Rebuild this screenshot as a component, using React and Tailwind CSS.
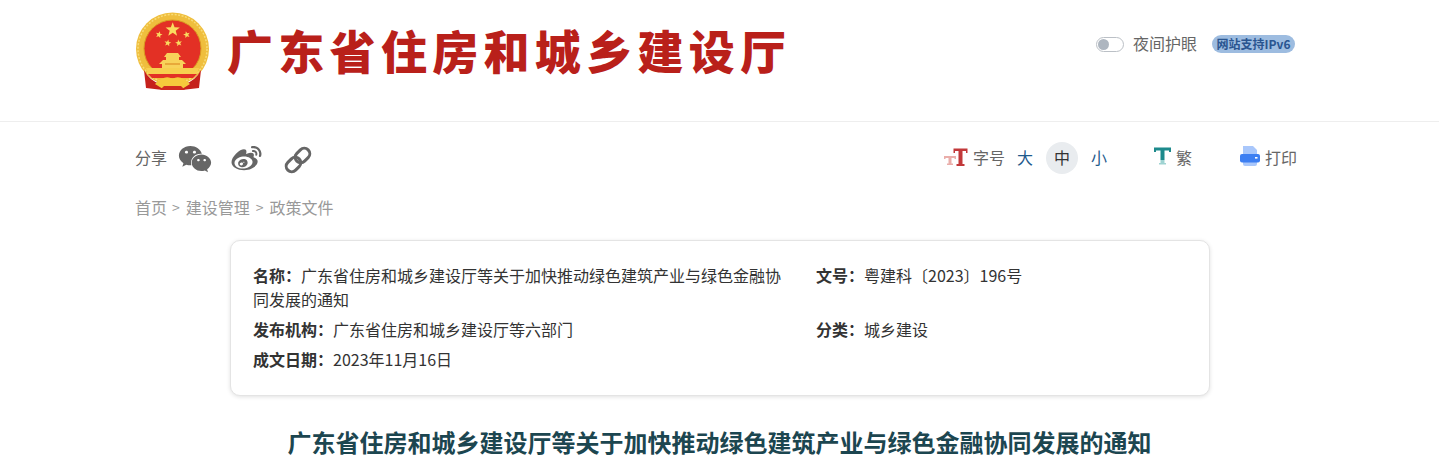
import React from "react";
import { FaWeixin, FaWeibo } from "react-icons/fa";

const font = { fontFamily: '"Noto Sans CJK SC", sans-serif' };

function Star({ cx, cy, r, rot = 0 }) {
  const pts = [];
  for (let i = 0; i < 10; i++) {
    const a = (-90 + rot + i * 36) * Math.PI / 180;
    const rr = i % 2 ? r * 0.42 : r;
    pts.push(`${(cx + rr * Math.cos(a)).toFixed(2)},${(cy + rr * Math.sin(a)).toFixed(2)}`);
  }
  return <polygon points={pts.join(" ")} fill="#fadb5f" />;
}

function Emblem() {
  return (
    <svg width="76" height="80" viewBox="0 0 76 80" className="block">
      <circle cx="37.5" cy="37" r="36.5" fill="#efbe3d" />
      <circle cx="37.5" cy="37" r="34.5" fill="none" stroke="#f8dc78" strokeWidth="1.5" strokeDasharray="2 1.5" />
      <circle cx="37.5" cy="36.5" r="28.5" fill="#e33025" stroke="#d99a22" strokeWidth="1" />
      <Star cx={37.7} cy={17.7} r={7.5} />
      <Star cx={24} cy={22.7} r={3.6} rot={15} />
      <Star cx={51.7} cy={22.7} r={3.6} rot={-15} />
      <Star cx={32.7} cy={31} r={3.6} rot={10} />
      <Star cx={43.7} cy={31} r={3.6} rot={-10} />
      <path d="M29 45 L32 41 H43 L46 45 H44 V48 H47 L51 52 H48 V56 H27 V52 H24 L28 48 H31 V45Z" fill="#f8d25a" />
      <path d="M30 51 H45 V53 H30Z" fill="#e8a93a" />
      <path d="M11 56 H64 L62 62 H13Z" fill="#f7cf4f" />
      <path d="M13 62 H62 L58 66 H17Z" fill="#e33025" />
      <path d="M9 58 Q14 68 25 72 L28 78 L11 76 Z" fill="#c5211c" />
      <path d="M66 58 Q61 68 50 72 L47 78 L64 76 Z" fill="#c5211c" />
      <path d="M20 72 Q30 62 37.5 67 Q45 62 55 72 L47 77 H28Z" fill="#f5c93c" />
      <path d="M25 78 H50 L46 74 H29Z" fill="#cf2a20" />
    </svg>
  );
}

function Link() {
  return (
    <svg width="28" height="28" viewBox="0 0 28 28" fill="none" stroke="#666" strokeWidth="3">
      <rect x="13" y="1.5" width="11" height="16" rx="5.5" transform="rotate(45 18.5 9.5)" />
      <rect x="4" y="10.5" width="11" height="16" rx="5.5" transform="rotate(45 9.5 18.5)" />
    </svg>
  );
}

function SizeIcon() {
  return (
    <svg width="25" height="19" viewBox="0 0 25 19">
      <path d="M1 8 H13 V11 H11.5 V10 H8.5 V15.5 H10 V17 H4 V15.5 H5.5 V10 H2.5 V11 H1Z" fill="#eaaeaa" />
      <path d="M10.5 0.5 H24.5 V5 H23 V3 H19.5 V16 H21.5 V18 H13.5 V16 H15.5 V3 H12 V5 H10.5Z" fill="#c2393a" />
    </svg>
  );
}

function TradIcon() {
  return (
    <svg width="17" height="18" viewBox="0 0 17 18">
      <path d="M0 0.5 H17 V5 H15 V3.5 H10.5 V13 H6.5 V3.5 H2 V5 H0Z" fill="#1d8a8c" />
      <path d="M6.5 13 H10.5 V16 H12 V17.5 H5 V16 H6.5Z" fill="#9fd3d2" />
    </svg>
  );
}

function Printer() {
  return (
    <svg width="20" height="22" viewBox="0 0 20 22">
      <path d="M3 1 H13 L17 5 V10 H3Z" fill="#a9c7fb" />
      <path d="M3 16 H17 V19 Q17 21 15 21 H5 Q3 21 3 19Z" fill="#a9c7fb" />
      <rect x="0" y="9" width="20" height="8.5" rx="2" fill="#3d7ff2" />
      <rect x="15" y="12" width="2.5" height="1.6" fill="#fff" />
    </svg>
  );
}

function Row({ label, children }) {
  return (
    <div className="text-[16px] leading-6 text-[#333]">
      <b className="font-bold text-[#333]">{label}：</b>
      {children}
    </div>
  );
}

export default function App() {
  return (
    <div className="w-[1439px] h-[468px] overflow-hidden bg-white" style={font}>
      <header className="h-[122px] border-b border-[#eeeeee]">
        <div className="w-[1162px] ml-[135px] flex items-start">
          <div className="pt-[12px] w-[76px] shrink-0"><Emblem /></div>
          <div className="ml-[16px] mt-[17px] text-[46px] leading-[64px] font-black text-[#b9201a] tracking-[5.3px] whitespace-nowrap">广东省住房和城乡建设厅</div>
          <div className="ml-auto mt-[31px] flex items-center h-[26px]">
            <span className="relative block w-[28px] h-[15px] rounded-full border border-[#bbc0c6] bg-white">
              <span className="absolute left-[1px] top-[1px] w-[11px] h-[11px] rounded-full bg-[#aeb6c0]" />
            </span>
            <span className="ml-[9px] pb-[2px] text-[16px] text-[#666]">夜间护眼</span>
            <span className="ml-[15px] w-[83px] h-[18px] rounded-full bg-[#9dbce0] text-[#2a5590] text-[12px] leading-[18px] font-bold text-center whitespace-nowrap">网站支持IPv6</span>
            <span className="w-[2px]" />
          </div>
        </div>
      </header>

      <div className="w-[1162px] ml-[135px] h-[72px] flex items-start justify-between pt-[20px]">
        <div className="flex items-center h-[32px] text-[#666] text-[16px] -mt-[1px]">
          <span>分享</span>
          <FaWeixin className="ml-[11px] mt-[4px] w-[34px] h-[30px] text-[#666]" />
          <FaWeibo className="ml-[17px] mt-[3px] w-[35px] h-[30px] text-[#666]" />
          <span className="ml-[20px] mt-[6px]"><Link /></span>
        </div>
        <div className="flex items-center h-[32px] -mt-[1px] text-[16px] text-[#666]">
          <SizeIcon />
          <span className="ml-[5px]">字号</span>
          <span className="ml-[12px] text-[#1f5a8c]">大</span>
          <span className="ml-[13px] mt-[2px] pb-[2px] w-[32px] h-[32px] rounded-full bg-[#e9ecef] text-[#333] flex items-center justify-center">中</span>
          <span className="ml-[13px] text-[#1f5a8c]">小</span>
          <span className="ml-[47px] -mt-[3px]"><TradIcon /></span>
          <span className="ml-[5px]">繁</span>
          <span className="ml-[48px] -mt-[3px]"><Printer /></span>
          <span className="ml-[5px]">打印</span>
        </div>
      </div>

      <nav className="ml-[135px] -mt-[3px] h-[32px] flex items-center text-[16px] text-[#999] whitespace-nowrap">
        首页<span className="ml-[5px] mr-[6px] text-[14px]">&gt;</span>建设管理<span className="mx-[6px] text-[14px]">&gt;</span>政策文件
      </nav>

      <section className="ml-[230px] mt-[17px] w-[980px] h-[156px] bg-white rounded-[10px] border border-[#e4e4e4] shadow-[0_1px_4px_rgba(0,0,0,0.12)] pl-[22px] pt-[22px] grid grid-cols-[563px_1fr] auto-rows-min content-start gap-y-[6px]">
        <div className="w-[540px]"><Row label="名称">广东省住房和城乡建设厅等关于加快推动绿色建筑产业与绿色金融协同发展的通知</Row></div>
        <Row label="文号">粤建科〔2023〕196号</Row>
        <Row label="发布机构">广东省住房和城乡建设厅等六部门</Row>
        <Row label="分类">城乡建设</Row>
        <Row label="成文日期">2023年11月16日</Row>
      </section>

      <h1 className="mt-[26px] text-center text-[24px] leading-[40px] font-bold text-[#1c4650]">广东省住房和城乡建设厅等关于加快推动绿色建筑产业与绿色金融协同发展的通知</h1>
    </div>
  );
}
